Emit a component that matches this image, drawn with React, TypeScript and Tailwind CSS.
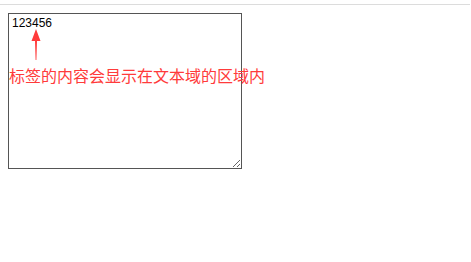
export default function App() {
  return (
    <div className="relative h-[262px] w-[471px] bg-white">
      <div className="pt-[4px]">
        <div className="h-px w-[470px] bg-[#dcdcdc]" />
      </div>
      <div className="relative ml-[8px] mt-[8px]">
        <textarea
          readOnly
          value="123456"
          className="block h-[156px] w-[234px] border border-[#555] bg-white px-[3px] pt-[2px] text-[12px] leading-[14px] text-black outline-none"
          style={{ fontFamily: '"Liberation Sans", Arial, sans-serif' }}
        />
        {/* annotation arrow */}
        <svg
          className="absolute left-[23px] top-[16px]"
          width="10"
          height="32"
          viewBox="0 0 10 32"
        >
          <path d="M5 0 L9.5 12 L6 12 L5.4 31 L4.6 31 L4 12 L0.5 12 Z" fill="#ff3b3b" />
        </svg>
        <span
          className="absolute left-[1px] top-[54px] whitespace-nowrap text-[16px] leading-[16px] text-[#ff3b3b]"
          style={{ fontFamily: '"Noto Sans CJK SC", "Noto Sans", sans-serif' }}
        >
          标签的内容会显示在文本域的区域内
        </span>
      </div>
    </div>
  );
}
